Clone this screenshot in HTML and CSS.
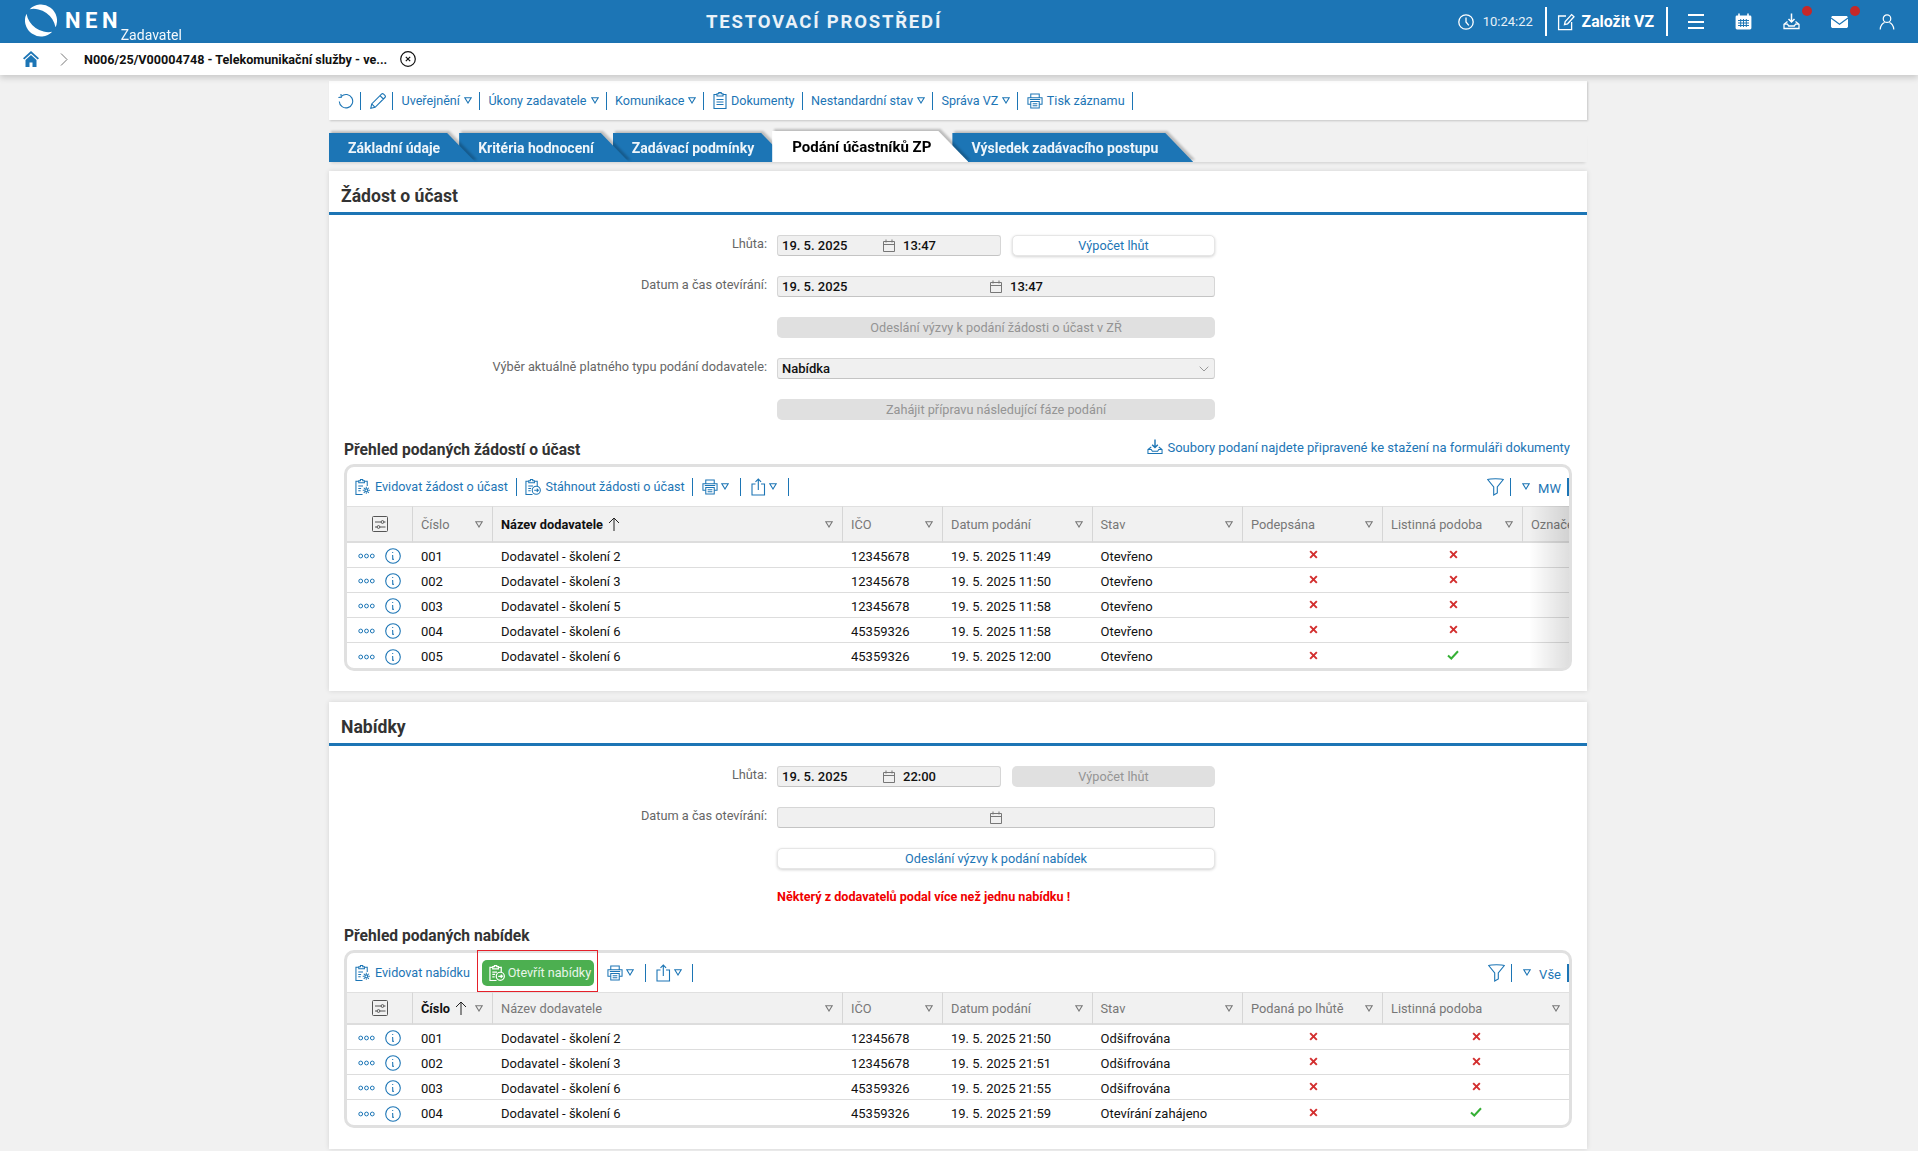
FILE: index.html
```html
<!DOCTYPE html>
<html lang="cs">
<head>
<meta charset="utf-8">
<title>NEN Zadavatel</title>
<link rel="stylesheet" href="styles.css">
</head>
<body>
<svg class="defs" width="0" height="0" aria-hidden="true">
  <symbol id="i-clock" viewBox="0 0 16 16"><circle cx="8" cy="8" r="7.2"/><path d="M8 3.5V8l2.8 3.4"/></symbol>
  <symbol id="i-edit" viewBox="0 0 18 18"><path d="M9 3H1.6v13.6h13V9"/><path d="M7.5 11.6l.7-3L14.6 1.6l2.4 2.2-6.4 7z"/></symbol>
  <symbol id="i-cal" viewBox="0 0 17 17"><rect x=".6" y="2.6" width="15.8" height="13.8" rx="1.4" fill="#fff" stroke="none"/><path d="M4 .5v4M13 .5v4" stroke="#fff" stroke-width="1.6"/><path d="M3 7.5h11M3 10h11M3 12.5h11M5.7 6v8M8.5 6v8M11.3 6v8" stroke="#1c75b5" stroke-width="1"/></symbol>
  <symbol id="i-dl" viewBox="0 0 17 17"><path d="M8.5.5v8M5.5 6l3 3 3-3" stroke-width="1.5"/><path d="M1 11.200h3.500l1.200 1.800h5.600l1.200-1.800H16M4.500 8.500L1 11.200v4.300h15v-4.300l-3.500-2.700"/></symbol>
  <symbol id="i-mail" viewBox="0 0 17 12"><path d="M0 1.300L1.200 0h14.600L17 1.300 8.500 7.500z" fill="#fff" stroke="none"/><path d="M0 2.800v8L1 12h15l1-1.200v-8L8.500 9z" fill="#fff" stroke="none"/></symbol>
  <symbol id="i-user" viewBox="0 0 16 17"><circle cx="8" cy="5" r="4"/><path d="M.8 16.500c0-4.500 3-7 4.700-7.500M15.200 16.500c0-4.500-3-7-4.700-7.500"/></symbol>
  <symbol id="i-home" viewBox="0 0 16 16"><path d="M8 0L0 7.200l1.300 1.300L8 2.400l6.700 6.100L16 7.200z"/><path d="M8 4L2.500 9v7h4v-4.500h3V16h4V9z"/></symbol>
  <symbol id="i-chev" viewBox="0 0 8 13"><path d="M1 .5l6 6-6 6"/></symbol>
  <symbol id="i-close" viewBox="0 0 16 16"><circle cx="8" cy="8" r="7.300"/><path d="M5.800 5.800l4.400 4.400M10.200 5.800l-4.400 4.400"/></symbol>
  <symbol id="i-refresh" viewBox="0 0 16 16"><path d="M3.400 3.300A6.700 6.700 0 1 1 1.300 8.500"/><path d="M3.200 1v3.200H.2" transform="rotate(-8 3 3)"/></symbol>
  <symbol id="i-pencil" viewBox="0 0 16 16"><path d="M.8 15.200l.9-4.300L11.500 1.100a1.500 1.500 0 0 1 2.100 0l1.300 1.300a1.500 1.500 0 0 1 0 2.100L5.100 14.300zM1.700 10.900l3.400 3.400M10 2.600l3.400 3.400"/></symbol>
  <symbol id="i-doc" viewBox="0 0 14 17"><path d="M4 2.500H1v14h12v-14h-3"/><path d="M4 4V1.800h1.800V.6h2.400v1.200H10V4zM3.500 7.500h7M3.500 10h7M3.500 12.500h7"/></symbol>
  <symbol id="i-print" viewBox="0 0 17 17"><path d="M4 5V1h9v4M4 12H1V5h15v7h-3"/><path d="M4 9h9v7H4zM6 11.500h5M6 13.500h5M3 7h11"/></symbol>
  <symbol id="i-clipgear" viewBox="0 0 17 17"><path d="M4 2.500H1v14h7M10 2.500h3v5"/><path d="M4 4V1.800h1.800V.6h2.400v1.200H10V4zM3.500 7.500h5M3.500 10h3M3.500 12.500h2.500"/><circle cx="12" cy="12" r="1.500"/><path d="M12 8.200v1.800M12 14v1.800M8.200 12H10M14 12h1.800M9.300 9.300l1.300 1.300M13.400 13.400l1.300 1.300M9.300 14.700l1.300-1.300M13.400 10.600l1.300-1.300"/></symbol>
  <symbol id="i-cliparrow" viewBox="0 0 17 17"><path d="M4 2.500H1v14h7M10 2.500h3v5"/><path d="M4 4V1.800h1.800V.6h2.400v1.200H10V4zM3.500 7.500h5M3.500 10h3M3.500 12.500h2.500"/><circle cx="12" cy="12" r="4.300"/><path d="M9.800 12h4.400M12.500 10.300l1.700 1.700-1.700 1.700"/></symbol>
  <symbol id="i-share" viewBox="0 0 15 18"><path d="M4.500 6H1v11h12.500V6H10M7.300 12V1M4.500 3.800L7.300 1l2.800 2.800"/></symbol>
  <symbol id="i-funnel" viewBox="0 0 17 18"><path d="M.7 1.500C3 .4 14 .4 16.300 1.500L10.300 9v6l-3.600 2V9z"/></symbol>
  <symbol id="i-tri" viewBox="0 0 8 7"><path d="M.8.800h6.400L4 6z"/></symbol>
  <symbol id="i-set" viewBox="0 0 16 16"><rect x=".5" y=".5" width="15" height="15" rx="1"/><path d="M3 6h6M12 6h1.500M3 11h2M8 11h5.500"/><circle cx="10.500" cy="6" r="1.400"/><circle cx="6.500" cy="11" r="1.400"/></symbol>
  <symbol id="i-dots" viewBox="0 0 17 6"><circle cx="2.700" cy="3" r="1.900"/><circle cx="8.500" cy="3" r="1.900"/><circle cx="14.300" cy="3" r="1.900"/></symbol>
  <symbol id="i-info" viewBox="0 0 16 16"><circle cx="8" cy="8" r="7.300"/><path d="M7.200 4.500h1M7.600 7c.2 1.500.2 3 .1 4.200l1.200.2"/></symbol>
  <symbol id="i-up" viewBox="0 0 12 14"><path d="M6 14V1M1 6l5-5 5 5"/></symbol>
  <symbol id="i-calsm" viewBox="0 0 12 13"><path d="M.5 2.500h11v10H.5zM.5 5.500h11M3 .5v3M9 .5v3"/></symbol>
  <symbol id="i-down" viewBox="0 0 10 6"><path d="M.7.700L5 5l4.300-4.300"/></symbol>
  <symbol id="i-x" viewBox="0 0 10 10"><path d="M1.300 1.300l7.400 7.400M8.700 1.300L1.300 8.700"/></symbol>
  <symbol id="i-ok" viewBox="0 0 12 10"><path d="M1 5.500L4.300 8.500 11 1.200"/></symbol>
</svg>

<header class="topbar">
  <div class="brand">
    <svg class="logo" viewBox="0 0 32 33"><path d="M4.700 5.200A16 16 0 0 1 30.500 23.300A22.300 22.300 0 0 0 4.700 5.200z" fill="#fff"/><path d="M4.700 5.200A16 16 0 0 1 30.500 23.300A22.300 22.300 0 0 0 4.700 5.200z" fill="#fff" transform="rotate(180 16 16.500)"/></svg>
    <span class="nen">NEN</span>
    <span class="role">Zadavatel</span>
  </div>
  <div class="env">TESTOVACÍ PROSTŘEDÍ</div>
  <div class="tools">
    <svg class="ic-16 st-w"><use href="#i-clock"/></svg>
    <span class="time">10:24:22</span>
    <span class="wsep"></span>
    <svg class="ic-18 st-w"><use href="#i-edit"/></svg>
    <span class="new">Založit VZ</span>
    <span class="wsep"></span>
    <span class="burger"><i></i><i></i><i></i></span>
    <svg class="ic-17 st-w cal"><use href="#i-cal"/></svg>
    <span class="badged dl"><svg class="ic-17 st-w"><use href="#i-dl"/></svg><b class="dot"></b></span>
    <span class="badged ml"><svg class="ic-mail"><use href="#i-mail"/></svg><b class="dot"></b></span>
    <svg class="ic-16 st-w usr"><use href="#i-user"/></svg>
  </div>
</header>

<nav class="crumbs">
  <svg class="ic-16 fl-b home"><use href="#i-home"/></svg>
  <svg class="ic-chev"><use href="#i-chev"/></svg>
  <span class="crumb">N006/25/V00004748 - Telekomunikační služby - ve...</span>
  <svg class="ic-16 st-k x-close"><use href="#i-close"/></svg>
</nav>

<main class="page">
  <div class="actionbar">
    <span class="tb"><svg class="ic-16 st-b"><use href="#i-refresh"/></svg></span>
    <span class="tb"><svg class="ic-16 st-b"><use href="#i-pencil"/></svg></span>
    <span class="tb">Uveřejnění<svg class="tri"><use href="#i-tri"/></svg></span>
    <span class="tb">Úkony zadavatele<svg class="tri"><use href="#i-tri"/></svg></span>
    <span class="tb">Komunikace<svg class="tri"><use href="#i-tri"/></svg></span>
    <span class="tb"><svg class="ic-doc st-b"><use href="#i-doc"/></svg>Dokumenty</span>
    <span class="tb">Nestandardní stav<svg class="tri"><use href="#i-tri"/></svg></span>
    <span class="tb">Správa VZ<svg class="tri"><use href="#i-tri"/></svg></span>
    <span class="tb"><svg class="ic-16 st-b"><use href="#i-print"/></svg>Tisk záznamu</span>
  </div>

  <div class="tabs">
    <span class="tab t1">Základní údaje</span>
    <span class="tab t2">Kritéria hodnocení</span>
    <span class="tab t3">Zadávací podmínky</span>
    <span class="tab active">Podání účastníků ZP</span>
    <span class="tab t5">Výsledek zadávacího postupu</span>
  </div>

  <section class="card">
    <h2 class="card-title">Žádost o účast</h2>
    <div class="form">
      <div class="row"><span class="lbl">Lhůta:</span>
        <div class="pair">
          <div class="dt"><span class="d">19. 5. 2025</span><svg class="ic-cal"><use href="#i-calsm"/></svg><span>13:47</span></div>
          <button class="btn white">Výpočet lhůt</button>
        </div>
      </div>
      <div class="row"><span class="lbl">Datum a čas otevírání:</span>
        <div class="dt wide"><span class="d">19. 5. 2025</span><svg class="ic-cal"><use href="#i-calsm"/></svg><span>13:47</span></div>
      </div>
      <div class="row"><span class="lbl"></span><button class="btn off wide">Odeslání výzvy k podání žádosti o účast v ZŘ</button></div>
      <div class="row"><span class="lbl">Výběr aktuálně platného typu podání dodavatele:</span>
        <div class="select wide"><span>Nabídka</span><svg class="ic-down"><use href="#i-down"/></svg></div>
      </div>
      <div class="row"><span class="lbl"></span><button class="btn off wide">Zahájit přípravu následující fáze podání</button></div>
    </div>
    <div class="sub">
      <h3>Přehled podaných žádostí o účast</h3>
      <a class="filelink"><svg class="ic-16 st-b"><use href="#i-dl"/></svg>Soubory podaní najdete připravené ke stažení na formuláři dokumenty</a>
    </div>
    <div class="grid">
      <div class="gbar">
        <span class="tb gfirst"><svg class="ic-16 st-b"><use href="#i-clipgear"/></svg>Evidovat žádost o účast</span>
        <span class="tb"><svg class="ic-16 st-b"><use href="#i-cliparrow"/></svg>Stáhnout žádosti o účast</span>
        <span class="tb icons"><svg class="ic-16 st-b"><use href="#i-print"/></svg><svg class="tri"><use href="#i-tri"/></svg></span>
        <span class="tb icons"><svg class="ic-share st-b"><use href="#i-share"/></svg><svg class="tri"><use href="#i-tri"/></svg></span>
        <span class="gspacer"></span>
        <span class="tb tight"><svg class="ic-funnel st-b"><use href="#i-funnel"/></svg></span>
        <span class="tb tight end"><svg class="tri"><use href="#i-tri"/></svg><span class="pick">MW</span></span>
      </div>
      <div class="gbody fade">
        <table class="tbl tall">
          <colgroup><col class="c1"><col class="c2"><col class="c3"><col class="c4"><col class="c5"><col class="c6"><col class="c7"><col class="c8"><col class="c9"></colgroup>
          <thead><tr>
            <th class="ctr"><svg class="ic-16 st-s"><use href="#i-set"/></svg></th>
            <th><div class="h"><span>Číslo</span><svg class="tri g"><use href="#i-tri"/></svg></div></th>
            <th><div class="h"><span class="sorted">Název dodavatele<svg class="ic-up"><use href="#i-up"/></svg></span><svg class="tri g"><use href="#i-tri"/></svg></div></th>
            <th><div class="h"><span>IČO</span><svg class="tri g"><use href="#i-tri"/></svg></div></th>
            <th><div class="h"><span>Datum podání</span><svg class="tri g"><use href="#i-tri"/></svg></div></th>
            <th><div class="h"><span>Stav</span><svg class="tri g"><use href="#i-tri"/></svg></div></th>
            <th><div class="h"><span>Podepsána</span><svg class="tri g"><use href="#i-tri"/></svg></div></th>
            <th><div class="h"><span>Listinná podoba</span><svg class="tri g"><use href="#i-tri"/></svg></div></th>
            <th><div class="h"><span>Označení</span></div></th>
          </tr></thead>
          <tbody>
            <tr><td class="acts"><svg class="ic-dots"><use href="#i-dots"/></svg><svg class="ic-16 st-b"><use href="#i-info"/></svg></td><td>001</td><td>Dodavatel - školení 2</td><td>12345678</td><td>19. 5. 2025 11:49</td><td>Otevřeno</td><td class="ctr"><svg class="ic-x"><use href="#i-x"/></svg></td><td class="ctr"><svg class="ic-x"><use href="#i-x"/></svg></td><td></td></tr>
            <tr><td class="acts"><svg class="ic-dots"><use href="#i-dots"/></svg><svg class="ic-16 st-b"><use href="#i-info"/></svg></td><td>002</td><td>Dodavatel - školení 3</td><td>12345678</td><td>19. 5. 2025 11:50</td><td>Otevřeno</td><td class="ctr"><svg class="ic-x"><use href="#i-x"/></svg></td><td class="ctr"><svg class="ic-x"><use href="#i-x"/></svg></td><td></td></tr>
            <tr><td class="acts"><svg class="ic-dots"><use href="#i-dots"/></svg><svg class="ic-16 st-b"><use href="#i-info"/></svg></td><td>003</td><td>Dodavatel - školení 5</td><td>12345678</td><td>19. 5. 2025 11:58</td><td>Otevřeno</td><td class="ctr"><svg class="ic-x"><use href="#i-x"/></svg></td><td class="ctr"><svg class="ic-x"><use href="#i-x"/></svg></td><td></td></tr>
            <tr><td class="acts"><svg class="ic-dots"><use href="#i-dots"/></svg><svg class="ic-16 st-b"><use href="#i-info"/></svg></td><td>004</td><td>Dodavatel - školení 6</td><td>45359326</td><td>19. 5. 2025 11:58</td><td>Otevřeno</td><td class="ctr"><svg class="ic-x"><use href="#i-x"/></svg></td><td class="ctr"><svg class="ic-x"><use href="#i-x"/></svg></td><td></td></tr>
            <tr><td class="acts"><svg class="ic-dots"><use href="#i-dots"/></svg><svg class="ic-16 st-b"><use href="#i-info"/></svg></td><td>005</td><td>Dodavatel - školení 6</td><td>45359326</td><td>19. 5. 2025 12:00</td><td>Otevřeno</td><td class="ctr"><svg class="ic-x"><use href="#i-x"/></svg></td><td class="ctr"><svg class="ic-ok"><use href="#i-ok"/></svg></td><td></td></tr>
          </tbody>
        </table>
      </div>
    </div>
  </section>

  <section class="card second">
    <h2 class="card-title">Nabídky</h2>
    <div class="form">
      <div class="row"><span class="lbl">Lhůta:</span>
        <div class="pair">
          <div class="dt"><span class="d">19. 5. 2025</span><svg class="ic-cal"><use href="#i-calsm"/></svg><span>22:00</span></div>
          <button class="btn off">Výpočet lhůt</button>
        </div>
      </div>
      <div class="row"><span class="lbl">Datum a čas otevírání:</span>
        <div class="dt wide"><span class="d"></span><svg class="ic-cal"><use href="#i-calsm"/></svg><span></span></div>
      </div>
      <div class="row"><span class="lbl"></span><button class="btn white wide">Odeslání výzvy k podání nabídek</button></div>
    </div>
    <p class="warn">Některý z dodavatelů podal více než jednu nabídku !</p>
    <div class="sub">
      <h3>Přehled podaných nabídek</h3>
    </div>
    <div class="grid">
      <div class="gbar">
        <span class="tb gfirst nosep"><svg class="ic-16 st-b"><use href="#i-clipgear"/></svg>Evidovat nabídku</span>
        <span class="redbox"><span class="green"><svg class="ic-16 st-w"><use href="#i-cliparrow"/></svg>Otevřít nabídky</span></span>
        <span class="tb icons"><svg class="ic-16 st-b"><use href="#i-print"/></svg><svg class="tri"><use href="#i-tri"/></svg></span>
        <span class="tb icons"><svg class="ic-share st-b"><use href="#i-share"/></svg><svg class="tri"><use href="#i-tri"/></svg></span>
        <span class="gspacer"></span>
        <span class="tb tight"><svg class="ic-funnel st-b"><use href="#i-funnel"/></svg></span>
        <span class="tb tight end"><svg class="tri"><use href="#i-tri"/></svg><span class="pick">Vše</span></span>
      </div>
      <div class="gbody">
        <table class="tbl">
          <colgroup><col class="c1"><col class="c2"><col class="c3"><col class="c4"><col class="c5"><col class="c6"><col class="c7"><col class="c8b"></colgroup>
          <thead><tr>
            <th class="ctr"><svg class="ic-16 st-s"><use href="#i-set"/></svg></th>
            <th><div class="h"><span class="sorted">Číslo<svg class="ic-up"><use href="#i-up"/></svg></span><svg class="tri g"><use href="#i-tri"/></svg></div></th>
            <th><div class="h"><span>Název dodavatele</span><svg class="tri g"><use href="#i-tri"/></svg></div></th>
            <th><div class="h"><span>IČO</span><svg class="tri g"><use href="#i-tri"/></svg></div></th>
            <th><div class="h"><span>Datum podání</span><svg class="tri g"><use href="#i-tri"/></svg></div></th>
            <th><div class="h"><span>Stav</span><svg class="tri g"><use href="#i-tri"/></svg></div></th>
            <th><div class="h"><span>Podaná po lhůtě</span><svg class="tri g"><use href="#i-tri"/></svg></div></th>
            <th><div class="h"><span>Listinná podoba</span><svg class="tri g"><use href="#i-tri"/></svg></div></th>
          </tr></thead>
          <tbody>
            <tr><td class="acts"><svg class="ic-dots"><use href="#i-dots"/></svg><svg class="ic-16 st-b"><use href="#i-info"/></svg></td><td>001</td><td>Dodavatel - školení 2</td><td>12345678</td><td>19. 5. 2025 21:50</td><td>Odšifrována</td><td class="ctr"><svg class="ic-x"><use href="#i-x"/></svg></td><td class="ctr"><svg class="ic-x"><use href="#i-x"/></svg></td></tr>
            <tr><td class="acts"><svg class="ic-dots"><use href="#i-dots"/></svg><svg class="ic-16 st-b"><use href="#i-info"/></svg></td><td>002</td><td>Dodavatel - školení 3</td><td>12345678</td><td>19. 5. 2025 21:51</td><td>Odšifrována</td><td class="ctr"><svg class="ic-x"><use href="#i-x"/></svg></td><td class="ctr"><svg class="ic-x"><use href="#i-x"/></svg></td></tr>
            <tr><td class="acts"><svg class="ic-dots"><use href="#i-dots"/></svg><svg class="ic-16 st-b"><use href="#i-info"/></svg></td><td>003</td><td>Dodavatel - školení 6</td><td>45359326</td><td>19. 5. 2025 21:55</td><td>Odšifrována</td><td class="ctr"><svg class="ic-x"><use href="#i-x"/></svg></td><td class="ctr"><svg class="ic-x"><use href="#i-x"/></svg></td></tr>
            <tr><td class="acts"><svg class="ic-dots"><use href="#i-dots"/></svg><svg class="ic-16 st-b"><use href="#i-info"/></svg></td><td>004</td><td>Dodavatel - školení 6</td><td>45359326</td><td>19. 5. 2025 21:59</td><td>Otevírání zahájeno</td><td class="ctr"><svg class="ic-x"><use href="#i-x"/></svg></td><td class="ctr"><svg class="ic-ok"><use href="#i-ok"/></svg></td></tr>
          </tbody>
        </table>
      </div>
    </div>
  </section>
</main>
</body>
</html>
```

FILE: styles.css
```css
* { box-sizing: border-box; }
html, body { margin: 0; height: 100%; overflow: hidden; }
body { background: #f1f1f1; font-family: Roboto, "Liberation Sans", sans-serif; font-size: 13px; color: #111; }
.defs { position: absolute; }
svg { display: block; flex: none; fill: none; }

.st-w { stroke: #fff; stroke-width: 1.3; }
.st-b { stroke: #1c75b5; stroke-width: 1.1; }
.st-k { stroke: #111; stroke-width: 1.2; }
.st-s { stroke: #555; stroke-width: 1; }
.fl-b { fill: #1c75b5; }
.ic-16 { width: 16px; height: 16px; }
.ic-17 { width: 17px; height: 17px; }
.ic-18 { width: 18px; height: 18px; }

/* top bar */
.topbar { height: 43px; background: #1c75b5; color: #fff; display: flex; align-items: center; }
.brand { width: 706px; height: 43px; padding-left: 25px; display: flex; align-items: flex-start; }
.logo { width: 32px; height: 33px; margin-top: 4px; }
.nen { font-size: 22px; font-weight: 700; letter-spacing: 4.6px; margin: 8px 0 0 8px; line-height: 26px; }
.role { font-size: 14px; line-height: 16px; margin: 27px 0 0 -1.500px; opacity: .95; }
.env { font-size: 18.500px; font-weight: 700; letter-spacing: 1.800px; color: #eaf2f8; }
.tools { margin-left: auto; display: flex; align-items: center; height: 43px; padding-right: 23px; }
.time { font-size: 13px; margin: 0 12px 0 9px; color: #e8f1f7; }
.wsep { width: 2px; height: 29px; background: #fff; }
.tools .ic-18 { margin: 0 7px 0 9.700px; }
.new { font-size: 15.800px; font-weight: 700; margin-right: 12px; }
.burger { display: flex; flex-direction: column; gap: 4.500px; width: 16px; margin: 0 31px 0 20px; }
.burger i { display: block; height: 2px; background: #fff; }
.cal { stroke: #fff; }
.badged { position: relative; display: block; }
.dl { margin-left: 31px; }
.ml { margin-left: 31px; }
.dot { position: absolute; top: -7px; right: -12px; width: 10px; height: 10px; border-radius: 50%; background: #c62828; }
.ml .dot { right: -12px; top: -10px; }
.ic-mail { width: 17px; height: 12px; }
.usr { margin-left: 31px; }

/* breadcrumbs */
.crumbs { height: 32px; background: #fff; display: flex; align-items: center; padding-left: 23px; box-shadow: 0 3px 6px rgba(0,0,0,.16); position: relative; }
.ic-chev { width: 8px; height: 13px; margin-left: 21px; stroke: #777; stroke-width: 1; }
.crumb { font-size: 12.600px; font-weight: 700; margin-left: 16px; }
.x-close { margin-left: 13px; }

/* page */
.page { margin: 6px 0 0 329px; width: 1258px; }
.actionbar { height: 39px; background: #fff; box-shadow: 1px 1px 2px rgba(0,0,0,.18); display: flex; align-items: center; }
.tb { display: flex; align-items: center; gap: 4px; height: 18px; padding: 0 7.500px 0 8.500px; border-right: 1px solid #1c75b5; color: #1c75b5; font-size: 12.600px; white-space: nowrap; }
.actionbar .tb { padding: 0 7px 0 8.500px; }
.actionbar .tb:nth-child(-n+2) { padding: 0 6px 0 9px; }
.tb.icons { gap: 3px; padding: 0 11px 0 8.700px; }
.tb.icons + .tb.icons { padding: 0 10.700px 0 10px; }
.tri { width: 8px; height: 7px; stroke: #1c75b5; stroke-width: 1.100; }
.tri.g { stroke: #777; margin: 0; }
.ic-doc { width: 14px; height: 17px; }
.ic-share { width: 15px; height: 18px; }
.ic-funnel { width: 17px; height: 18px; }

/* tabs */
.tabs { display: flex; align-items: flex-end; height: 31px; margin: 11px 0 9px; box-shadow: 0 3px 3px -2px rgba(0,0,0,.15); }
.tab { position: relative; isolation: isolate; display: flex; align-items: center; height: 29px; padding: 0 35px 0 19px; margin-left: -16px; color: #eef5fa; font-size: 14px; font-weight: 700; white-space: nowrap; filter: drop-shadow(2px -2px 1px rgba(0,0,0,.22)); }
.tab::before { content: ""; position: absolute; inset: 0; z-index: -1; background: #1c75b5; clip-path: polygon(0 0, calc(100% - 28px) 0, 100% 100%, 0 100%); }
.t1 { margin-left: 0; padding-left: 19px; z-index: 5; }
.t2 { z-index: 4; }
.t3 { z-index: 3; }
.t5 { z-index: 1; }
.tab.active { height: 31px; z-index: 6; color: #000; font-size: 15px; padding: 0 37px 0 20px; margin-left: -17px; }
.tab.active::before { background: #fff; clip-path: polygon(0 0, calc(100% - 30px) 0, 100% 100%, 0 100%); }

/* cards */
.card { background: #fff; box-shadow: 0 0 5px rgba(0,0,0,.12); padding-bottom: 20px; }
.card.second { margin-top: 11px; padding-bottom: 21px; }
.card-title { margin: 0; height: 44px; padding: 11px 0 0 12px; font-size: 17.600px; line-height: 28px; font-weight: 700; color: #333; border-bottom: 3px solid #1c75b5; }
.form { padding-top: 20px; }
.row { display: flex; height: 21px; margin-bottom: 20px; }
.lbl { width: 438px; margin-right: 10px; text-align: right; color: #666; font-size: 12.750px; line-height: 17px; }
.wide { width: 438px; }
.pair { display: flex; gap: 11px; }
.pair .dt { width: 224px; }
.pair .btn { width: 203px; }
.dt, .select { height: 21px; background: #f0f0f0; border: 1px solid #d6d6d6; border-bottom-color: #c4c4c4; border-radius: 3px; font-weight: 500; font-size: 13px; color: #111; }
.dt { display: grid; grid-template-columns: 1fr 12px 1fr; column-gap: 8px; align-items: center; }
.d { padding-left: 4px; }
.ic-cal { width: 12px; height: 13px; stroke: #777; stroke-width: 1; }
.select { display: flex; align-items: center; justify-content: space-between; padding: 0 5px 0 4px; }
.ic-down { width: 10px; height: 6px; stroke: #999; stroke-width: 1; }
.btn { height: 21px; border: 0; border-radius: 5px; font: inherit; font-size: 12.700px; padding: 0; }
.btn.off { background: #e0e0e0; color: #949494; }
.btn.white { background: #fff; color: #1c75b5; border: 1px solid #e6e6e6; box-shadow: 0 1px 3px rgba(0,0,0,.18); }
.warn { margin: 0 0 21px 448px; height: 16px; line-height: 16px; color: #f00000; font-weight: 700; font-size: 12.600px; }

.sub { display: flex; justify-content: space-between; align-items: center; height: 20px; padding: 0 15px; margin-bottom: 4px; }
.sub h3 { margin: 0; font-size: 15.600px; font-weight: 700; color: #333; }
.filelink { display: flex; align-items: center; gap: 4px; color: #1c75b5; font-size: 13px; margin: -6px 2px 0 0; }

/* data grid */
.grid { margin: 0 15px; border: 3px solid #e0e0e0; border-radius: 10px; background: #fff; }
.gbar { height: 39px; display: flex; align-items: center; }
.gspacer { flex: 1; }
.gfirst { padding-left: 8px; gap: 4px; padding-right: 8px; }
.nosep { border-right: 0; padding-right: 7.500px; }
.tb.tight { padding: 0 5.700px 0 0; }
.tb.end { gap: 8px; padding: 0 6px 0 11px; border-right: 2px solid #1c75b5; }
.pick { margin-top: 3px; font-size: 13px; }
.redbox { display: flex; align-items: center; justify-content: center; width: 120.500px; height: 42px; padding-top: 4px; margin-bottom: 4px; border: 1px solid #e5202a; }
.green { display: flex; align-items: center; gap: 3px; width: 112px; height: 26px; padding-left: 7px; background: #4caf50; border-radius: 5px; color: #e8f5e9; font-size: 12.600px; white-space: nowrap; }
.gbody { position: relative; overflow: hidden; border-radius: 0 0 7px 7px; }
.fade::after { content: ""; position: absolute; top: 0; right: 0; bottom: 0; width: 40px; background: linear-gradient(90deg, rgba(0,0,0,0), rgba(0,0,0,.13)); }
.tbl { border-collapse: separate; border-spacing: 0; table-layout: fixed; width: 1222px; }
.tbl.tall { width: 1322px; }
.c1 { width: 66px; } .c2 { width: 80px; } .c3 { width: 350px; } .c4 { width: 100px; } .c5 { width: 149.500px; } .c6 { width: 150.500px; } .c7 { width: 140px; } .c8 { width: 140px; } .c9 { width: 146px; } .c8b { width: 186px; }
.tbl th { height: 33px; background: #f1f1f1; border-top: 1px solid #e0e0e0; border-bottom: 2px solid #ddd; border-right: 1px solid #d6d6d6; padding: 0 8px; font-weight: 400; text-align: left; color: #777; font-size: 12.800px; }
.tbl.tall th { height: 37px; }
.tbl th:last-child { border-right: 0; }
.h { display: flex; align-items: center; justify-content: space-between; padding-right: 1px; white-space: nowrap; }
.sorted { display: flex; align-items: center; gap: 5px; font-weight: 700; color: #111; }
.ic-up { width: 12px; height: 14px; stroke: #222; stroke-width: 1; }
.tbl td { height: 25px; border-bottom: 1px solid #ddd; padding: 2px 8px 0; color: #111; font-size: 13px; white-space: nowrap; }
.tbl tr:last-child td { border-bottom: 0; height: 25px; }
.ctr svg { margin: 0 auto; }
.tbl td.acts { padding: 2px 0 0 11px; }
.acts { display: flex; align-items: center; gap: 10px; }
.ic-dots { width: 17px; height: 6px; fill: none; stroke: #1c75b5; stroke-width: 1; }
.ic-x { width: 9px; height: 9px; stroke: #d32f2f; stroke-width: 2.200; margin-top: -3px !important; }
.ic-ok { width: 12px; height: 10px; stroke: #35b035; stroke-width: 2; margin-top: -3px !important; }
```
